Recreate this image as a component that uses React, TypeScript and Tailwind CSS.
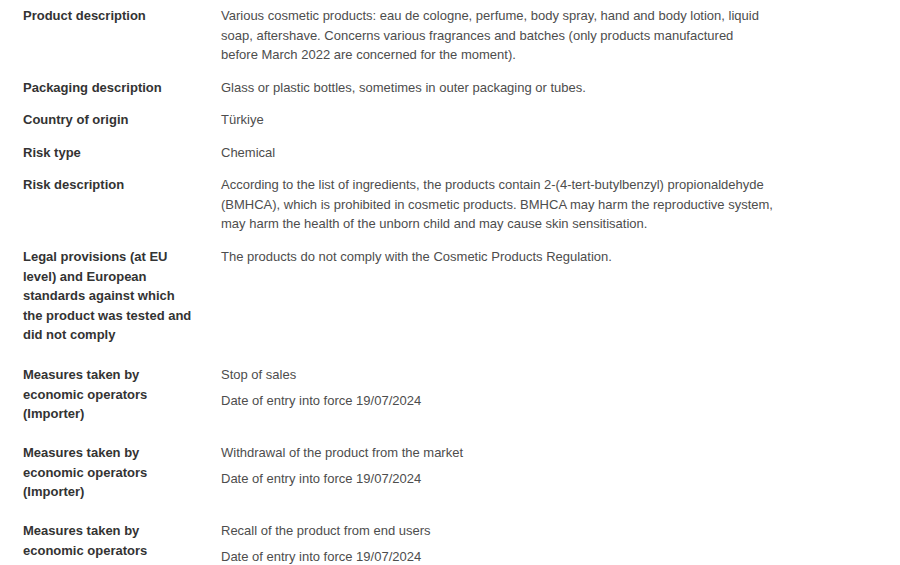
const rows: { label: string; values: string[]; pb: string }[] = [
  {
    label: "Product description",
    values: [
      "Various cosmetic products: eau de cologne, perfume, body spray, hand and body lotion, liquid soap, aftershave. Concerns various fragrances and batches (only products manufactured before March 2022 are concerned for the moment).",
    ],
    pb: "pb-[13.5px]",
  },
  {
    label: "Packaging description",
    values: ["Glass or plastic bottles, sometimes in outer packaging or tubes."],
    pb: "pb-[12.5px]",
  },
  { label: "Country of origin", values: ["Türkiye"], pb: "pb-[13.5px]" },
  { label: "Risk type", values: ["Chemical"], pb: "pb-[12.5px]" },
  {
    label: "Risk description",
    values: [
      "According to the list of ingredients, the products contain 2-(4-tert-butylbenzyl) propionaldehyde (BMHCA), which is prohibited in cosmetic products. BMHCA may harm the reproductive system, may harm the health of the unborn child and may cause skin sensitisation.",
    ],
    pb: "pb-[13.5px]",
  },
  {
    label:
      "Legal provisions (at EU level) and European standards against which the product was tested and did not comply",
    values: ["The products do not comply with the Cosmetic Products Regulation."],
    pb: "pb-[20.5px]",
  },
  {
    label: "Measures taken by economic operators (Importer)",
    values: ["Stop of sales", "Date of entry into force 19/07/2024"],
    pb: "pb-[19.5px]",
  },
  {
    label: "Measures taken by economic operators (Importer)",
    values: ["Withdrawal of the product from the market", "Date of entry into force 19/07/2024"],
    pb: "pb-[19.5px]",
  },
  {
    label: "Measures taken by economic operators (Importer)",
    values: ["Recall of the product from end users", "Date of entry into force 19/07/2024"],
    pb: "pb-[19.5px]",
  },
];

export default function App() {
  return (
    <div
      className="w-[900px] h-[565px] overflow-hidden bg-white pt-[6px] text-[13px] leading-[19.5px]"
      style={{ fontFamily: '"Liberation Sans", Arial, sans-serif' }}
    >
      <dl className="flex flex-col">
        {rows.map((row, i) => (
          <div key={i} className={`flex ${row.pb}`}>
            <dt className="w-[221px] shrink-0 pl-[23px] pr-[27px] font-bold text-[#333]">
              {row.label}
            </dt>
            <dd className="w-[552px] flex flex-col gap-[6.5px] text-[#4d4d4d]">
              {row.values.map((v, j) => (
                <p key={j}>{v}</p>
              ))}
            </dd>
          </div>
        ))}
      </dl>
    </div>
  );
}
